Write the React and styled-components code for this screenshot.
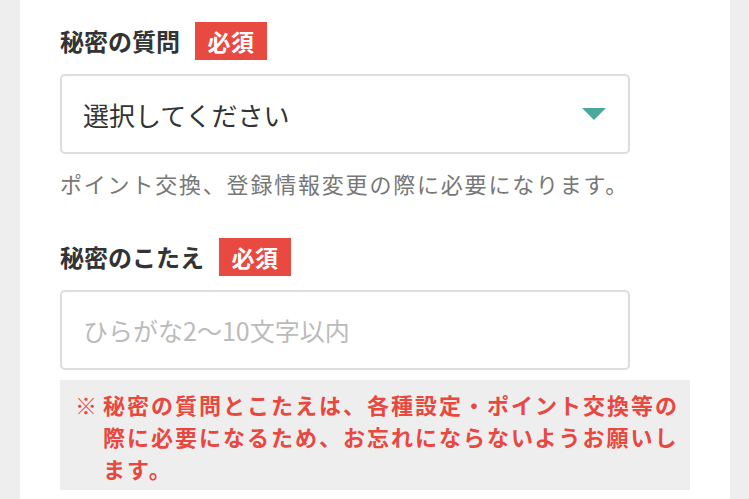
import React from 'react';
import styled, { createGlobalStyle } from 'styled-components';

const GlobalStyle = createGlobalStyle`
	html, body {
		margin: 0;
		padding: 0;
		background: #eeeeee;
		font-family: 'Noto Sans CJK JP', 'Noto Sans', sans-serif;
	}
`;

const Field = ({ label, children, first }) => (
	<StyledField first={first}>
		<LabelRow>
			<Label>{label}</Label>
			<Badge>必須</Badge>
		</LabelRow>
		{children}
	</StyledField>
);

const App = () => {
	return (
		<>
			<GlobalStyle />
			<Card>
				<Field label="秘密の質問" first>
					<Select>
						<span>選択してください</span>
						<Caret viewBox="0 0 24 12">
							<polygon points="0,0 24,0 12,12" />
						</Caret>
					</Select>
					<Help>ポイント交換、登録情報変更の際に必要になります。</Help>
				</Field>
				<Field label="秘密のこたえ">
					<Input placeholder="ひらがな2〜10文字以内" />
				</Field>
				<Notice>
					<span className="mark">※</span>
					<p>秘密の質問とこたえは、各種設定・ポイント交換等の際に必要になるため、お忘れにならないようお願いします。</p>
				</Notice>
			</Card>
		</>
	);
};

export default App;

const Card = styled.div`
	margin: 0 19px 0 20px;
	min-height: 499px;
	background: #fff;
	padding: 22px 40px 0;
	box-sizing: border-box;
`;

const StyledField = styled.section`
	margin-top: ${({ first }) => (first ? '0' : '38px')};
	max-width: 570px;
`;

const LabelRow = styled.div`
	display: flex;
	align-items: center;
	gap: 15px;
	height: 38px;
	margin-bottom: 14px;
`;

const Label = styled.h3`
	margin: 0;
	font-size: 24px;
	font-weight: 700;
	color: #333;
	line-height: 1;
`;

const Badge = styled.span`
	display: inline-flex;
	align-items: center;
	justify-content: center;
	width: 72px;
	height: 38px;
	background: #e84a42;
	color: #fff;
	font-size: 23px;
	font-weight: 600;
	letter-spacing: 0.5px;
`;

const Select = styled.div`
	display: flex;
	align-items: center;
	justify-content: space-between;
	height: 80px;
	box-sizing: border-box;
	border: 2px solid #dddddd;
	border-radius: 5px;
	padding: 0 22px 0 21px;

	span {
		font-size: 26px;
		color: #333;
	}
`;

const Caret = styled.svg`
	width: 24px;
	height: 12px;
	fill: #4ba89c;
`;

const Help = styled.p`
	margin: 13px 0 0;
	font-size: 22px;
	line-height: 33px;
	letter-spacing: 1.8px;
	color: #777;
	white-space: nowrap;
`;

const Input = styled.input`
	display: block;
	width: 100%;
	height: 80px;
	box-sizing: border-box;
	border: 2px solid #dddddd;
	border-radius: 5px;
	padding: 0 21px;
	font-family: inherit;
	font-size: 25px;
	color: #333;
	outline: none;

	&::placeholder {
		color: #bbbbbb;
	}
`;

const Notice = styled.div`
	display: flex;
	margin-top: 10px;
	padding: 8px 6px 6px 15px;
	background: #eeeeee;
	color: #e8483f;
	font-size: 22px;
	font-weight: 700;
	line-height: 32px;
	letter-spacing: 2px;

	.mark {
		flex: none;
		width: 28px;
	}

	p {
		margin: 0;
	}
`;
